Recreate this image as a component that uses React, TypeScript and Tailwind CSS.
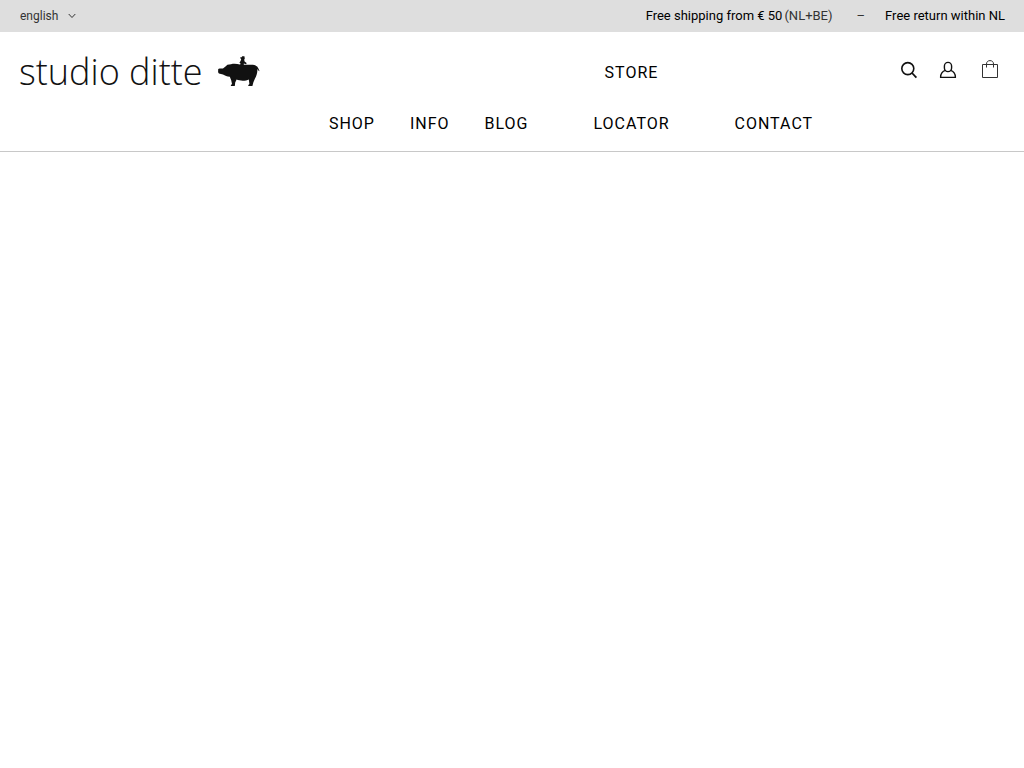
import React from 'react';

const navItems = [
  { label: 'SHOP', href: '#shop' },
  { label: 'INFO', href: '#info' },
  { label: 'BLOG', href: '#blog' },
  { label: 'STORE\nLOCATOR', href: '#store-locator', className: 'w-[136px]' },
  { label: 'CONTACT', href: '#contact' },
];

function PigLogo() {
  return (
    <svg viewBox="0 0 42 32" className="w-[42px] h-8 shrink-0" fill="#111" aria-hidden="true">
      <path d="M.2 13 1.6 12.4 5 12.6 7.8 10.2 9.4 8.8 13 8.2C16 7.2 19 7.8 22 8.4 26 9 29 8.7 32.6 8.7 36 8.5 38.3 9.3 39.2 10.6L40.4 12.4 41.5 15 41 15.2 39.4 13C39.5 17 38.4 20.2 37 22.4L35.4 26.2 34.4 29.9 30.2 30 30.4 29 31.4 28 30.8 23.4C28 25 22 25 18.6 23.6L17.2 26.4 16.8 29.9 12.8 30 13 29 14 28 13.2 24.2 11.8 20.8C9 20.4 7 19.4 5 18.4L.9 17.6.1 16.2Z" />
      <path d="M22 1.6 23.6 1.2 24.2.2 26.4.2 26.8 2.4 26.2 3.8 26.6 5.4 28.6 7 28.2 8.2 26.6 7.8 25.8 7.4 25.8 9.4 22 9.2 22.6 7.6 21.4 6.8 22.4 5.2 23.2 3.4Z" />
    </svg>
  );
}

function SearchIcon() {
  return (
    <svg viewBox="0 0 18 18" className="w-[18px] h-[18px]" fill="none" stroke="#111" aria-hidden="true">
      <circle cx="7.8" cy="7.6" r="6" strokeWidth="1.6" />
      <path d="M12 12 16.4 16.6" strokeWidth="1.8" />
    </svg>
  );
}

function UserIcon() {
  return (
    <svg viewBox="0 0 18 18" className="w-[18px] h-[18px]" fill="none" stroke="#111" strokeWidth="1.4" aria-hidden="true">
      <path d="M6.6 9.4C2.9 10.4 1.6 12.8 1.6 16.4h14.8c0-3.6-1.3-6-5-7" strokeLinejoin="round" />
      <rect x="5.4" y="1.4" width="7.2" height="9.2" rx="3.6" />
    </svg>
  );
}

function BagIcon() {
  return (
    <svg viewBox="0 0 18 20" className="w-[18px] h-5" fill="none" stroke="#333" aria-hidden="true">
      <path d="M1.5 4.5h15v13h-15z" />
      <path d="M5.5 7.5V4C5.5 1.8 7 .6 9 .6s3.5 1.2 3.5 3.4v3.5" />
    </svg>
  );
}

function TopBar() {
  return (
    <div className="flex items-center justify-between h-8 pl-5 pr-[19px] bg-[#dedede] text-[13px] text-[#333]">
      <div className="flex items-center">
        <select
          aria-label="Language"
          defaultValue="en"
          className="appearance-none w-12 bg-transparent text-xs text-[#333]"
        >
          <option value="en">english</option>
          <option value="nl">nederlands</option>
        </select>
        <svg viewBox="0 0 8 6" className="w-2 h-[6px] pointer-events-none" fill="none" stroke="#333" aria-hidden="true">
          <path d="M.7 1 4 4.5 7.3 1" />
        </svg>
      </div>
      <p className="flex items-center whitespace-nowrap text-black">
        <a href="#shipping">Free shipping from € 50</a>
        <span className="pl-[2px] text-[#333]">(NL+BE)</span>
        <span className="pl-6 pr-5 text-[#333]">–</span>
        <a href="#returns">Free return within NL</a>
      </p>
    </div>
  );
}

export default function App() {
  return (
    <div className="font-['Roboto',sans-serif] min-h-screen bg-white text-black">
      <TopBar />
      <header className="flex items-start pl-[19px] pr-[25px] border-b border-[#c8c8c8]">
        <a href="#home" className="flex items-start gap-3 pt-6 shrink-0">
          <span className="w-[187px] whitespace-nowrap font-['Open_Sans',sans-serif] font-light text-[36px] leading-8 text-[#111]">
            studio ditte
          </span>
          <PigLogo />
        </a>
        <nav className="flex-1 pt-[15px] pb-[2px]">
          <ul className="flex items-end justify-center gap-[35px]">
            {navItems.map((item) => (
              <li key={item.label} className={item.className}>
                <a
                  href={item.href}
                  className="block whitespace-pre-line text-center text-base leading-[51px] tracking-[1px]"
                >
                  {item.label}
                </a>
              </li>
            ))}
          </ul>
        </nav>
        <div className="flex items-center pt-7 pl-[18px] shrink-0">
          <button type="button" aria-label="Search" className="mr-[21px]">
            <SearchIcon />
          </button>
          <a href="#account" aria-label="Account" className="mr-6">
            <UserIcon />
          </a>
          <a href="#cart" aria-label="Cart">
            <BagIcon />
          </a>
        </div>
      </header>
    </div>
  );
}
